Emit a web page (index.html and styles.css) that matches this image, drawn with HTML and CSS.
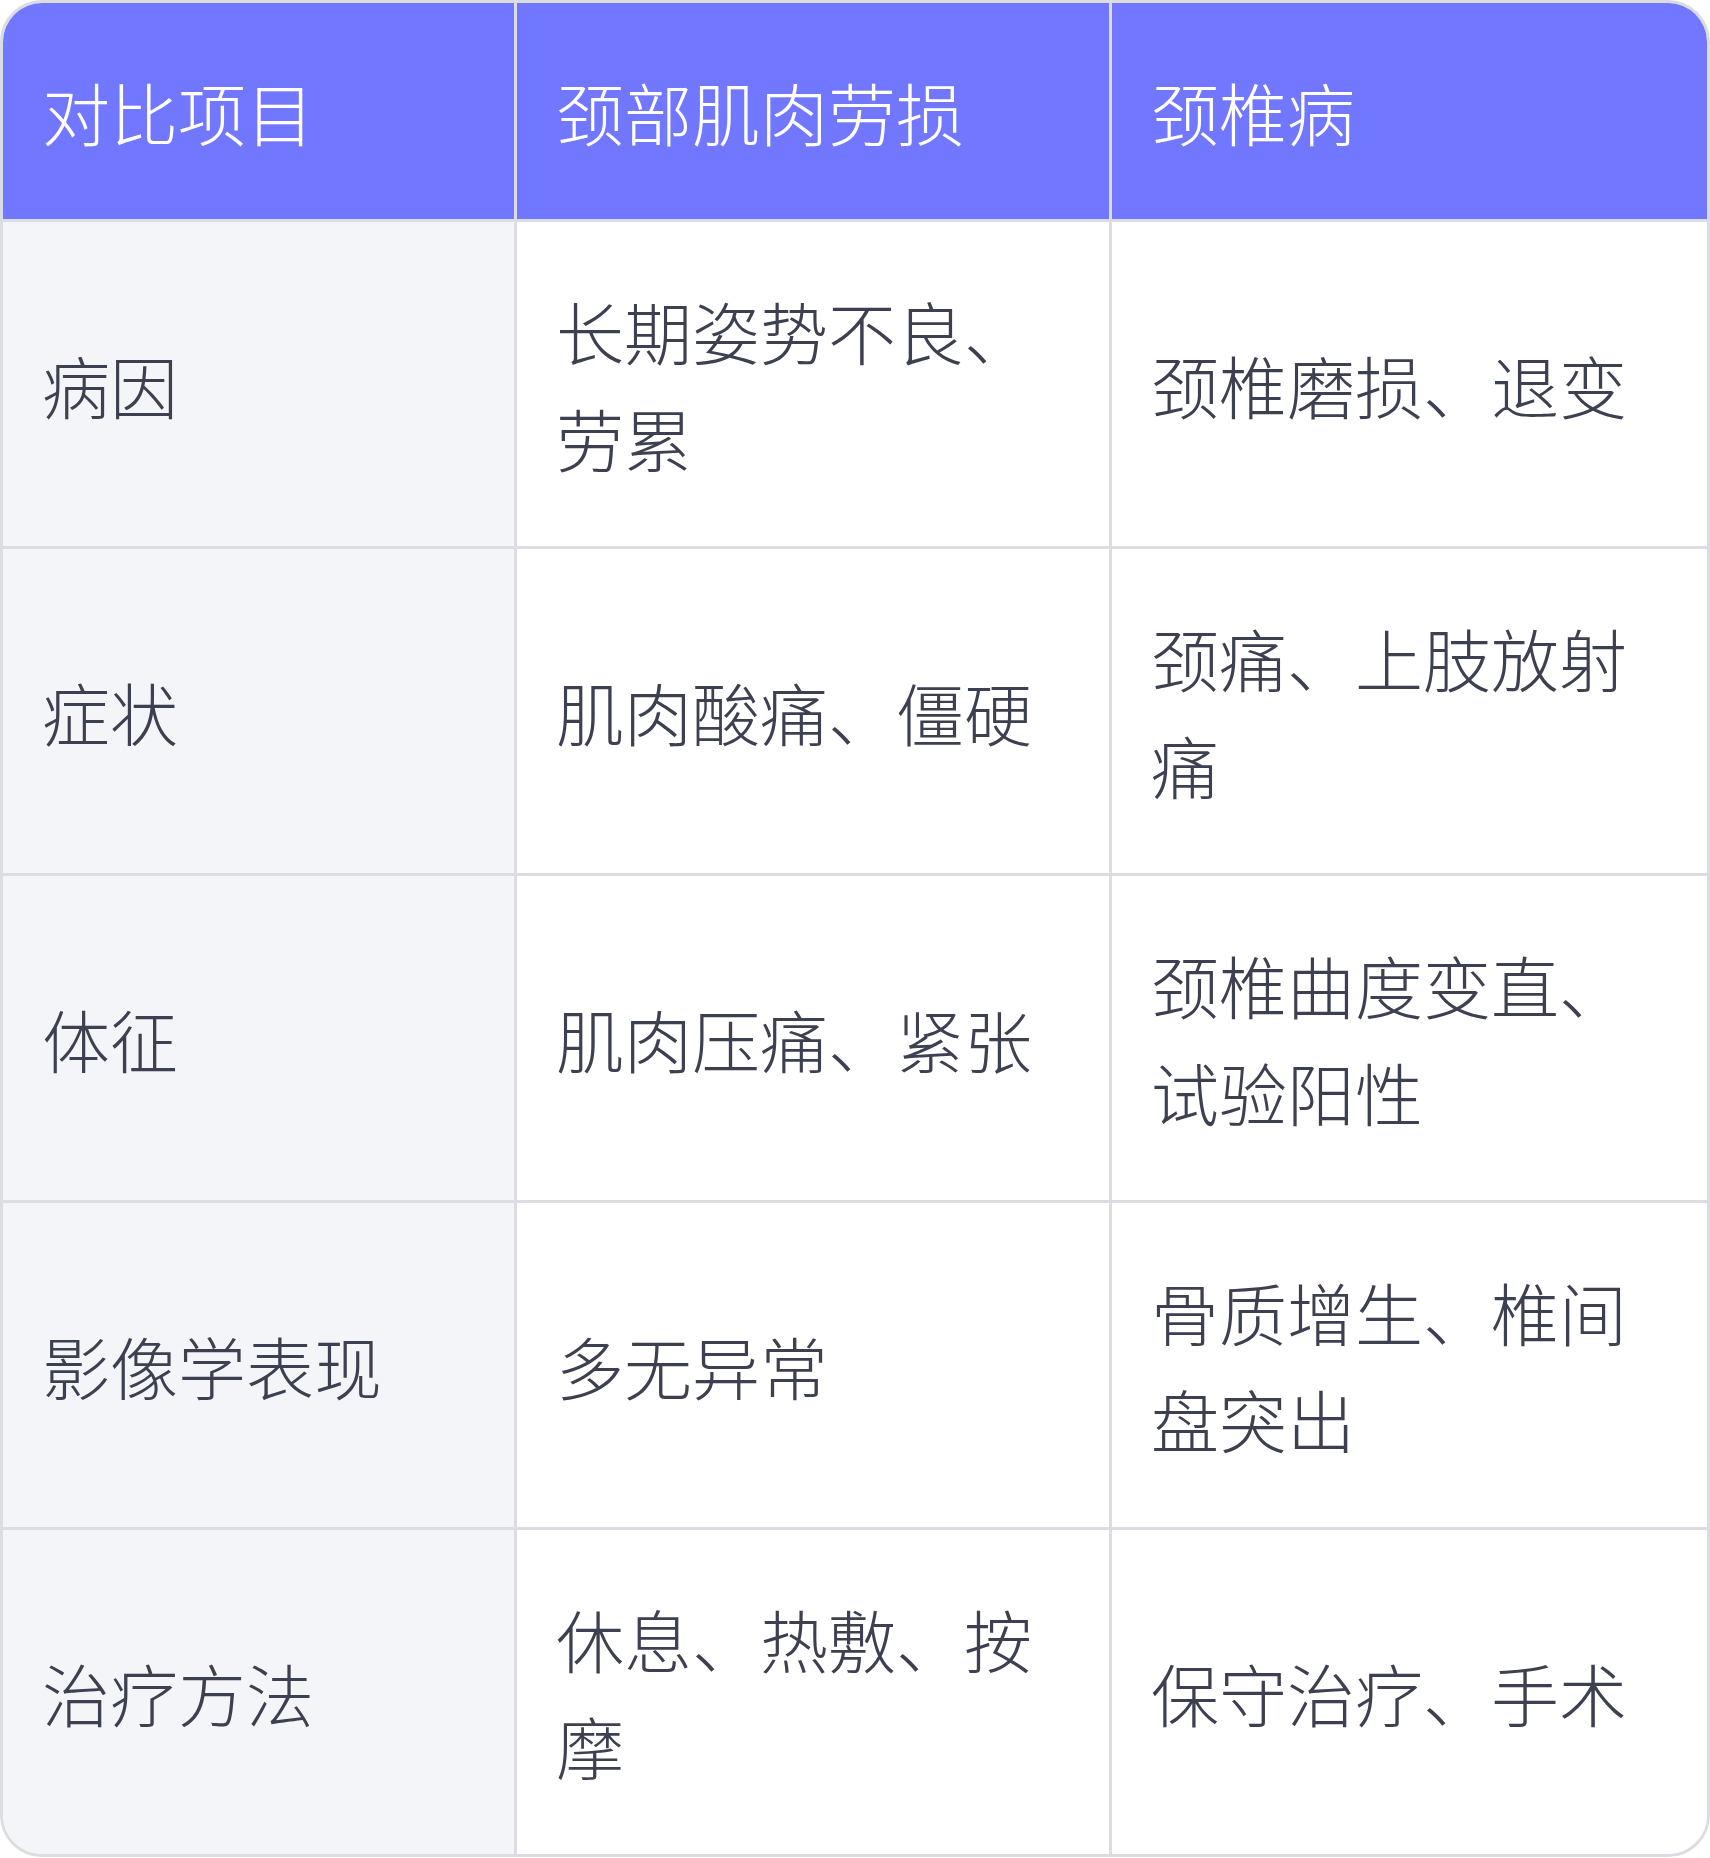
FILE: index.html
```html
<!DOCTYPE html>
<html lang="zh-CN">
<head>
<meta charset="utf-8">
<title>颈部肌肉劳损与颈椎病对比</title>
<link rel="stylesheet" href="styles.css">
</head>
<body>
<div class="table-wrap">
  <div class="grid" role="table">
    <div class="cell head c1" role="columnheader">对比项目</div>
    <div class="cell head c2" role="columnheader">颈部肌肉劳损</div>
    <div class="cell head c3" role="columnheader">颈椎病</div>

    <div class="cell label c1" role="cell">病因</div>
    <div class="cell c2" role="cell">长期姿势不良、劳累</div>
    <div class="cell c3" role="cell">颈椎磨损、退变</div>

    <div class="cell label c1" role="cell">症状</div>
    <div class="cell c2" role="cell">肌肉酸痛、僵硬</div>
    <div class="cell c3" role="cell">颈痛、上肢放射痛</div>

    <div class="cell label c1" role="cell">体征</div>
    <div class="cell c2" role="cell">肌肉压痛、紧张</div>
    <div class="cell c3" role="cell">颈椎曲度变直、试验阳性</div>

    <div class="cell label c1" role="cell">影像学表现</div>
    <div class="cell c2" role="cell">多无异常</div>
    <div class="cell c3" role="cell">骨质增生、椎间盘突出</div>

    <div class="cell label c1 last" role="cell">治疗方法</div>
    <div class="cell c2 last" role="cell">休息、热敷、按摩</div>
    <div class="cell c3 last" role="cell">保守治疗、手术</div>
  </div>
</div>
</body>
</html>
```
FILE: styles.css
```css
* { box-sizing: border-box; }

html, body {
  margin: 0;
  padding: 0;
  background: #ffffff;
}

body {
  font-family: "Noto Sans CJK SC", "Noto Sans", sans-serif;
  font-weight: 300;
  color: #3d4050;
}

.table-wrap {
  width: 1710px;
  border: 3px solid #dcdde2;
  border-radius: 42px;
  overflow: hidden;
  background: #ffffff;
}

.grid {
  display: grid;
  grid-template-columns: 514px 595px 595px;
}

.cell {
  display: flex;
  align-items: center;
  font-size: 68px;
  line-height: 107px;
  padding: 55px 39px;
  min-height: 327px;
  border-bottom: 3px solid #dcdde2;
  border-right: 3px solid #dcdde2;
  background: #ffffff;
}

.cell.c3 { border-right: none; }

.cell.last {
  border-bottom: none;
  min-height: 324px;
}

.cell.head {
  background: #7177ff;
  color: #ffffff;
  min-height: 219px;
  padding-top: 54px;
  padding-bottom: 54px;
}

.cell.label {
  background: #f4f5f9;
}
```
